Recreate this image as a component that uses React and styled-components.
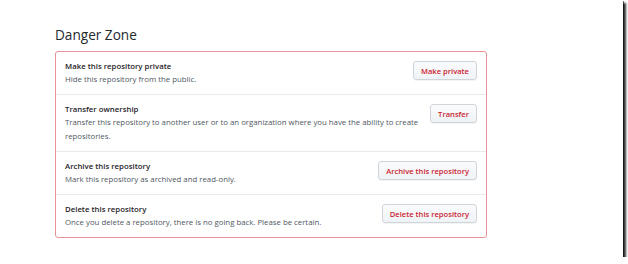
import React from "react";
import styled, { createGlobalStyle } from "styled-components";

const Global = createGlobalStyle`
  html, body { margin: 0; padding: 0; background: #ffffff; }
  body { font-family: "Open Sans", "Noto Sans", sans-serif; }
`;

const Frame = styled.div`
  box-sizing: border-box;
  width: 623px;
  height: 257px;
  background: #ffffff;
  box-shadow: 1px 1px 0 rgba(0, 0, 0, 0.55), 3px 3px 2px rgba(0, 0, 0, 0.8);
  padding: 26px 0 0 55px;
`;

const Heading = styled.h2`
  margin: 0 0 7px;
  font-size: 13.6px;
  line-height: 18px;
  font-weight: 400;
  color: #24292e;
`;

const DangerBox = styled.div`
  box-sizing: border-box;
  width: 432px;
  border: 1px solid #e8929b;
  border-radius: 3px;
  background: #ffffff;
`;

const Row = styled.div`
  display: flex;
  align-items: flex-start;
  gap: 8px;
  padding: 8px 9px 8px 9px;
  border-top: ${(p) => (p.$first ? "none" : "1px solid #e8eaed")};
`;

const Info = styled.div`
  flex: 1 1 auto;
  min-width: 0;
`;

const Title = styled.div`
  font-size: 7.8px;
  line-height: 12px;
  font-weight: 600;
  color: #1f2328;
`;

const Desc = styled.p`
  margin: 0;
  font-size: 7.8px;
  line-height: 14px;
  color: #4f575f;
`;

const DangerButton = styled.button`
  flex: 0 0 auto;
  margin-top: 1px;
  height: 19px;
  padding: 0 7px;
  font-family: inherit;
  font-size: 7.6px;
  font-weight: 600;
  color: #cb2431;
  background: linear-gradient(#fafbfc, #eff3f6);
  border: 1px solid #d1d5da;
  border-radius: 3px;
  box-shadow: 0 1px 0 rgba(27, 31, 35, 0.05);
  cursor: pointer;
`;

const rows = [
  {
    title: "Make this repository private",
    desc: "Hide this repository from the public.",
    action: "Make private",
  },
  {
    title: "Transfer ownership",
    desc:
      "Transfer this repository to another user or to an organization where you have the ability to create repositories.",
    action: "Transfer",
  },
  {
    title: "Archive this repository",
    desc: "Mark this repository as archived and read-only.",
    action: "Archive this repository",
  },
  {
    title: "Delete this repository",
    desc: "Once you delete a repository, there is no going back. Please be certain.",
    action: "Delete this repository",
  },
];

export default function App() {
  return (
    <>
      <Global />
      <Frame>
        <Heading>Danger Zone</Heading>
        <DangerBox>
          {rows.map((r, i) => (
            <Row key={r.title} $first={i === 0}>
              <Info>
                <Title>{r.title}</Title>
                <Desc>{r.desc}</Desc>
              </Info>
              <DangerButton type="button">{r.action}</DangerButton>
            </Row>
          ))}
        </DangerBox>
      </Frame>
    </>
  );
}
